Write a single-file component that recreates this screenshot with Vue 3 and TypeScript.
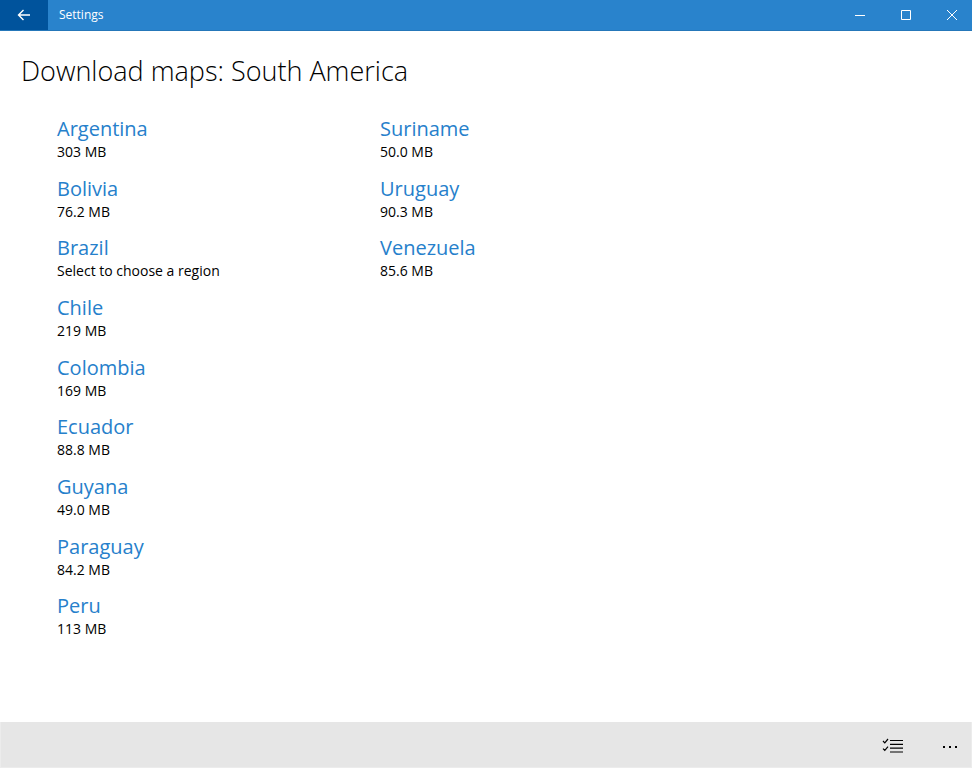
<script setup lang="ts">
interface Region {
  name: string
  detail: string
}

const regions: Region[] = [
  { name: 'Argentina', detail: '303 MB' },
  { name: 'Bolivia', detail: '76.2 MB' },
  { name: 'Brazil', detail: 'Select to choose a region' },
  { name: 'Chile', detail: '219 MB' },
  { name: 'Colombia', detail: '169 MB' },
  { name: 'Ecuador', detail: '88.8 MB' },
  { name: 'Guyana', detail: '49.0 MB' },
  { name: 'Paraguay', detail: '84.2 MB' },
  { name: 'Peru', detail: '113 MB' },
  { name: 'Suriname', detail: '50.0 MB' },
  { name: 'Uruguay', detail: '90.3 MB' },
  { name: 'Venezuela', detail: '85.6 MB' },
]
</script>

<template>
  <div class="window">
    <header class="titlebar">
      <button class="back" type="button" aria-label="Back">
        <svg width="14" height="12" viewBox="0 0 14 12"><path d="M13 6H1.5M6.5 1L1.5 6L6.5 11" /></svg>
      </button>
      <span class="app-name">Settings</span>
      <button class="caption" type="button" aria-label="Minimize">
        <svg width="12" height="12" viewBox="0 0 12 12"><path d="M1 6.5H11" /></svg>
      </button>
      <button class="caption" type="button" aria-label="Maximize">
        <svg width="12" height="12" viewBox="0 0 12 12"><path d="M1.5 1.5H10.5V10.5H1.5Z" /></svg>
      </button>
      <button class="caption" type="button" aria-label="Close">
        <svg width="12" height="12" viewBox="0 0 12 12"><path d="M1 1L11 11M11 1L1 11" /></svg>
      </button>
    </header>

    <main class="content">
      <h1>Download maps: South America</h1>
      <ul class="regions">
        <li v-for="region in regions" :key="region.name">
          <button class="region" type="button">
            <span class="name">{{ region.name }}</span>
            <span class="detail">{{ region.detail }}</span>
          </button>
        </li>
      </ul>
    </main>

    <footer class="commandbar">
      <button class="command" type="button" aria-label="Select">
        <svg class="checklist" width="22" height="16" viewBox="0 0 22 16">
          <path d="M8 2.5H21M8 6.3H21M8 10.2H21M8 14H21M1 3L2.8 4.8L6 1M1 10.6L2.8 12.4L6 8.6" />
        </svg>
      </button>
      <button class="command" type="button" aria-label="More">
        <svg class="dots" width="16" height="4" viewBox="0 0 16 4">
          <path d="M1 2h2v2H1zM7 2h2v2H7zM13 2h2v2H13z" />
        </svg>
      </button>
    </footer>
  </div>
</template>

<style>
body {
  margin: 0;
}
</style>

<style scoped>
.window {
  display: flex;
  flex-direction: column;
  min-height: 100vh;
  background: #fff;
  color: #000;
  font-family: "Segoe UI", "Open Sans", "Noto Sans", sans-serif;
}

button {
  padding: 0;
  border: 0;
  background: none;
  color: inherit;
  font: inherit;
}

svg {
  display: block;
  fill: none;
  stroke: currentColor;
}

.titlebar {
  display: flex;
  height: 30px;
  border-bottom: 1px solid #2577b9;
  background: #2983cc;
  color: #fff;
}

.titlebar button {
  display: grid;
  place-items: center;
}

.titlebar .back {
  width: 48px;
  background: #00539c;
}

.back svg {
  stroke-width: 1.4;
}

.app-name {
  flex: 1;
  padding-left: 11px;
  font-size: 12px;
  line-height: 30px;
}

.caption {
  width: 46px;
  padding-left: 6px;
}

.content {
  flex: 1;
  padding: 20px 21px;
}

h1 {
  margin: 0;
  font-size: 27px;
  font-weight: 300;
  line-height: 40px;
}

.regions {
  display: grid;
  grid-template-rows: repeat(9, 1fr);
  grid-auto-columns: 323px;
  grid-auto-flow: column;
  height: 537px;
  margin: 24px 0 0;
  padding: 0 0 0 36px;
  list-style: none;
}

.region {
  display: block;
  text-align: left;
}

.name,
.detail {
  display: block;
}

.name {
  color: #2680cb;
  font-size: 20px;
  line-height: 27px;
}

.detail {
  font-size: 14px;
  line-height: 19px;
}

.commandbar {
  display: flex;
  justify-content: flex-end;
  gap: 15px;
  box-sizing: border-box;
  height: 46px;
  border: 1px solid #ececec;
  border-top: 0;
  background: #e6e6e6;
}

.command {
  display: grid;
  place-items: center;
  width: 42px;
  padding-top: 2px;
}

.checklist {
  stroke-width: 1.2;
}

.dots {
  fill: currentColor;
  stroke: none;
}
</style>
